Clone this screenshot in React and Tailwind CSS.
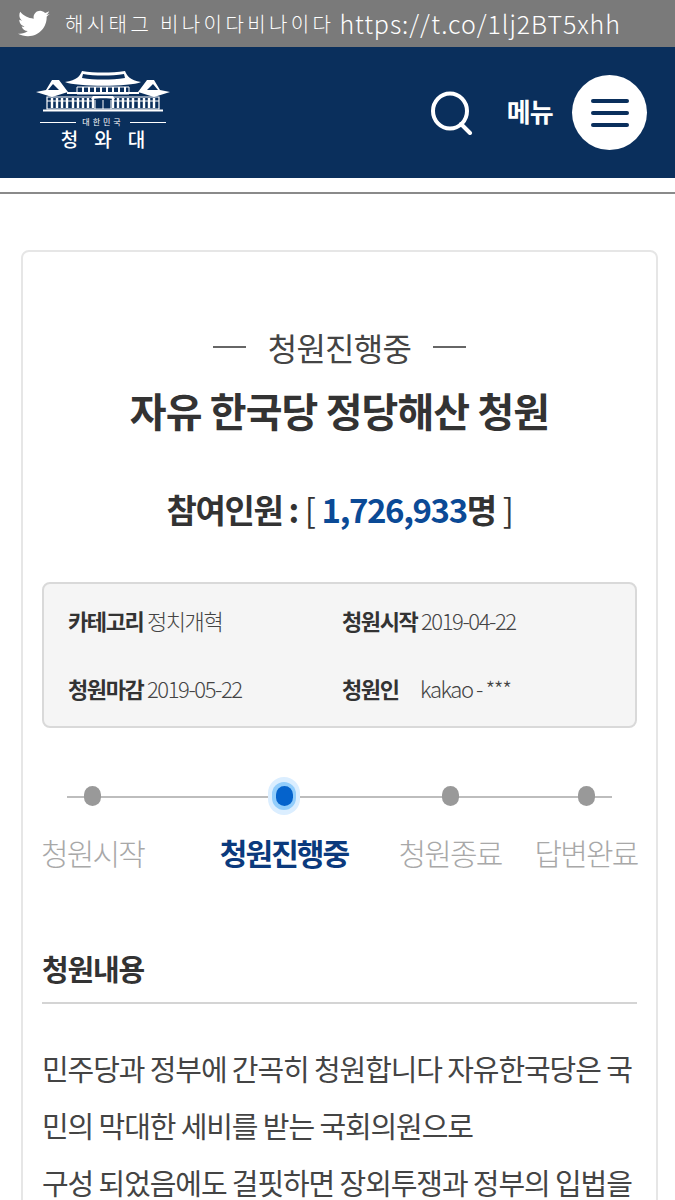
import React from 'react';

const KR = "font-['Noto_Sans_CJK_KR','Noto_Sans',sans-serif]";

const Logo = () => (
  <div className="flex flex-col items-center w-[136px] mb-[6px]">
    <svg width="136" height="46" viewBox="0 0 136 46" fill="none" stroke="#fff" strokeWidth="1.5">
      {/* main hall roof */}
      <path d="M30 14 C42 12 45 8 47 3 C60 5 76 5 90 3 C92 8 95 12 106 14 C95 19 42 19 30 14Z" fill="#fff" stroke="none" />
      <path d="M48 6 C60 8 76 8 89 6 L90 10 C76 12 60 12 47 10Z" fill="#0a2f5c" stroke="none" />
      {/* side pavilions */}
      <path d="M2 24 L12 22 L18 12 L25 12 L34 24 L18 29 Z" fill="#fff" stroke="none" transform="translate(-1 0)" />
      <path d="M18 16 L13 22 L24 22 Z" fill="#0a2f5c" stroke="none" />
      <path d="M134 24 L124 22 L118 12 L111 12 L102 24 L118 29 Z" fill="#fff" stroke="none" transform="translate(1 0)" />
      <path d="M118 16 L112 22 L123 22 Z" fill="#0a2f5c" stroke="none" />
      {/* upper windows */}
      <path d="M42 19 H94 V26 H42Z" strokeWidth="1" />
      <path d="M48 19V26M54 19V26M60 19V26M66 19V26M72 19V26M78 19V26M84 19V26M90 19V26" strokeWidth="2" />
      <path d="M32 25 H104" strokeWidth="2" />
      {/* lower windows */}
      <path d="M12 29 H124 V41 H12Z" strokeWidth="1.2" />
      <path d="M17 30V40M22 30V40M27 30V40M32 30V40M38 30V40M43 30V40M48 30V40M53 30V40M58 30V40M78 30V40M83 30V40M88 30V40M93 30V40M98 30V40M104 30V40M109 30V40M114 30V40M119 30V40" strokeWidth="2.4" />
      <path d="M12 33 H58 M78 33 H124" strokeWidth="1.2" />
      {/* porch */}
      <path d="M56 31 C62 30 74 30 80 31 L78 28 H58Z" fill="#fff" stroke="none" />
      <path d="M60 32V41M68 32V41M76 32V41" strokeWidth="1" />
      <path d="M8 42.5 H128" strokeWidth="2" />
    </svg>
    <div className="flex items-center gap-[6px] mt-[3px] h-[10px] w-[126px]">
      <div className="h-px flex-1 bg-white" />
      <span className={`${KR} text-[8px] tracking-[3px] leading-none text-white`}>대한민국</span>
      <div className="h-px flex-1 bg-white" />
    </div>
    <div className={`${KR} flex gap-[16px] text-[19px] font-medium leading-[24px] text-white`}>
      <span>청</span>
      <span>와</span>
      <span>대</span>
    </div>
  </div>
);

const Step = ({ label, active, className }) => (
  <div className={`flex flex-col items-center ${className}`}>
    <div className="h-[44px] flex items-center justify-center">
      {active ? (
        <div className="w-[32px] h-[38px] rounded-full bg-[#dbeeff] flex items-center justify-center">
          <div className="w-[24px] h-[28px] rounded-full bg-[#92cdfb] flex items-center justify-center">
            <div className="w-[17px] h-[20px] rounded-full bg-[#0563cc]" />
          </div>
        </div>
      ) : (
        <div className="w-[17px] h-[20px] rounded-full bg-[#999999]" />
      )}
    </div>
    <div className={`${KR} text-[30px] leading-[42px] tracking-[-1.9px] mt-[13px] whitespace-nowrap ${active ? 'font-bold text-[#0b3a7d]' : 'font-light text-[#a8a8a8]'}`}>
      {label}
    </div>
  </div>
);

const App = () => {
  return (
    <div className={`${KR} w-[675px] h-[1200px] overflow-hidden bg-white text-[#333]`}>
      {/* Tweet bar */}
      <div className="h-[47px] bg-[#7a7a7a] flex items-center pl-[18px] text-white">
        <svg width="32" height="28" viewBox="0 0 24 20" fill="#fff">
          <path d="M24 2.4c-.9.4-1.8.7-2.8.8 1-.6 1.8-1.6 2.2-2.7-1 .6-2 1-3.1 1.2C19.3.7 18 0 16.6 0c-2.7 0-4.9 2.2-4.9 4.9 0 .4 0 .8.1 1.1C7.7 5.8 4.1 3.8 1.7.9c-.4.7-.7 1.6-.7 2.5 0 1.7.9 3.2 2.2 4.1-.8 0-1.6-.2-2.2-.6v.1c0 2.4 1.7 4.4 3.9 4.8-.4.1-.8.2-1.3.2-.3 0-.6 0-.9-.1.6 2 2.4 3.4 4.6 3.4-1.7 1.3-3.8 2.1-6.1 2.1-.4 0-.8 0-1.2-.1C2.2 18.3 4.8 19.1 7.5 19.1c9.1 0 14-7.5 14-14v-.6c1-.7 1.8-1.6 2.5-2.1z" />
        </svg>
        <span className="ml-[15px] text-[20px] font-light tracking-[3.4px] whitespace-nowrap">해시태그 비나이다비나이다</span>
        <span className="ml-[5px] text-[25px] font-light tracking-[0.9px] whitespace-nowrap">https://t.co/1lj2BT5xhh</span>
      </div>

      {/* Header */}
      <header className="h-[131px] bg-[#0a2f5c] flex items-center pl-[35px] pr-[28px] text-white">
        <Logo />
        <svg className="ml-auto" width="42" height="44" viewBox="0 0 42 44" fill="none" stroke="#fff" strokeWidth="4" strokeLinecap="round">
          <ellipse cx="19" cy="20" rx="17" ry="17.5" />
          <path d="M30 33 L39 42" />
        </svg>
        <span className="ml-[34px] mb-[4px] text-[26px] font-bold tracking-[-0.8px] leading-none">메뉴</span>
        <div className="ml-[19px] w-[75px] h-[75px] rounded-full bg-white flex flex-col items-center justify-center gap-[8px]">
          <div className="w-[38px] h-[4px] rounded-full bg-[#0a2f5c]" />
          <div className="w-[38px] h-[4px] rounded-full bg-[#0a2f5c]" />
          <div className="w-[38px] h-[4px] rounded-full bg-[#0a2f5c]" />
        </div>
      </header>

      <div className="h-[14px] bg-white" />
      <div className="h-[2px] bg-[#8a8a8a]" />

      {/* Petition card */}
      <main className="mt-[56px] ml-[21px] w-[637px] border-2 border-[#e6e6e6] rounded-[8px] px-[19px] pt-[72px] pb-[60px]">
        <div className="flex items-center justify-center gap-[22px]">
          <div className="w-[33px] h-[2px] bg-[#666]" />
          <span className="text-[32px] leading-[46px] tracking-[-0.7px] text-[#444]">청원진행중</span>
          <div className="w-[33px] h-[2px] bg-[#666]" />
        </div>
        <h1 className="mt-[12px] text-center text-[40px] leading-[56px] font-bold tracking-[-0.9px] text-[#333]">
          자유 한국당 정당해산 청원
        </h1>
        <div className="mt-[46px] flex justify-center items-baseline text-[33px] leading-[50px] font-bold tracking-[-1.4px] text-[#333]">
          <span>참여인원 :</span>
          <span className="ml-[7px] font-normal">[</span>
          <span className="ml-[7px] text-[#0b4a96]">1,726,933</span>
          <span>명</span>
          <span className="ml-[7px] font-normal">]</span>
        </div>

        {/* Meta box */}
        <div className="mt-[48px] h-[146px] border-2 border-[#d9d9d9] rounded-[8px] bg-[#f5f5f5] pl-[24px] pb-[2px] grid grid-cols-[274px_1fr] content-center gap-y-[26px] text-[22px] leading-[42px] tracking-[-1.4px] text-[#444]">
          <div className="whitespace-nowrap"><b className="font-bold text-[#333]">카테고리</b> <span className="font-light">정치개혁</span></div>
          <div className="whitespace-nowrap"><b className="font-bold text-[#333]">청원시작</b> <span className="font-light">2019-04-22</span></div>
          <div className="whitespace-nowrap"><b className="font-bold text-[#333]">청원마감</b> <span className="font-light">2019-05-22</span></div>
          <div className="whitespace-nowrap"><b className="font-bold text-[#333]">청원인</b> <span className="font-light ml-[18px]">kakao - ***</span></div>
        </div>

        {/* Progress */}
        <div className="relative mt-[46px] h-[103px]">
          <div className="absolute left-[25px] right-[25px] top-[22px] h-[2px] bg-[#bdbdbd]" />
          <div className="relative flex">
            <Step label="청원시작" className="w-[101px]" />
            <Step label="청원진행중" active className="ml-[77px] w-[128px]" />
            <Step label="청원종료" className="ml-[51px] w-[102px]" />
            <Step label="답변완료" className="ml-[34px] w-[102px]" />
          </div>
        </div>

        {/* Body */}
        <h2 className="mt-[68px] text-[29px] leading-[46px] font-bold tracking-[-1.2px] text-[#333] pb-[11px] border-b-2 border-[#d4d4d4]">
          청원내용
        </h2>
        <div className="mt-[36px] text-[29px] leading-[57px] tracking-[-1.1px] text-[#444] whitespace-nowrap">
          <p>민주당과 정부에 간곡히 청원합니다 자유한국당은 국</p>
          <p>민의 막대한 세비를 받는 국회의원으로</p>
          <p>구성 되었음에도 걸핏하면 장외투쟁과 정부의 입법을</p>
        </div>
      </main>
    </div>
  );
};

export default App;
